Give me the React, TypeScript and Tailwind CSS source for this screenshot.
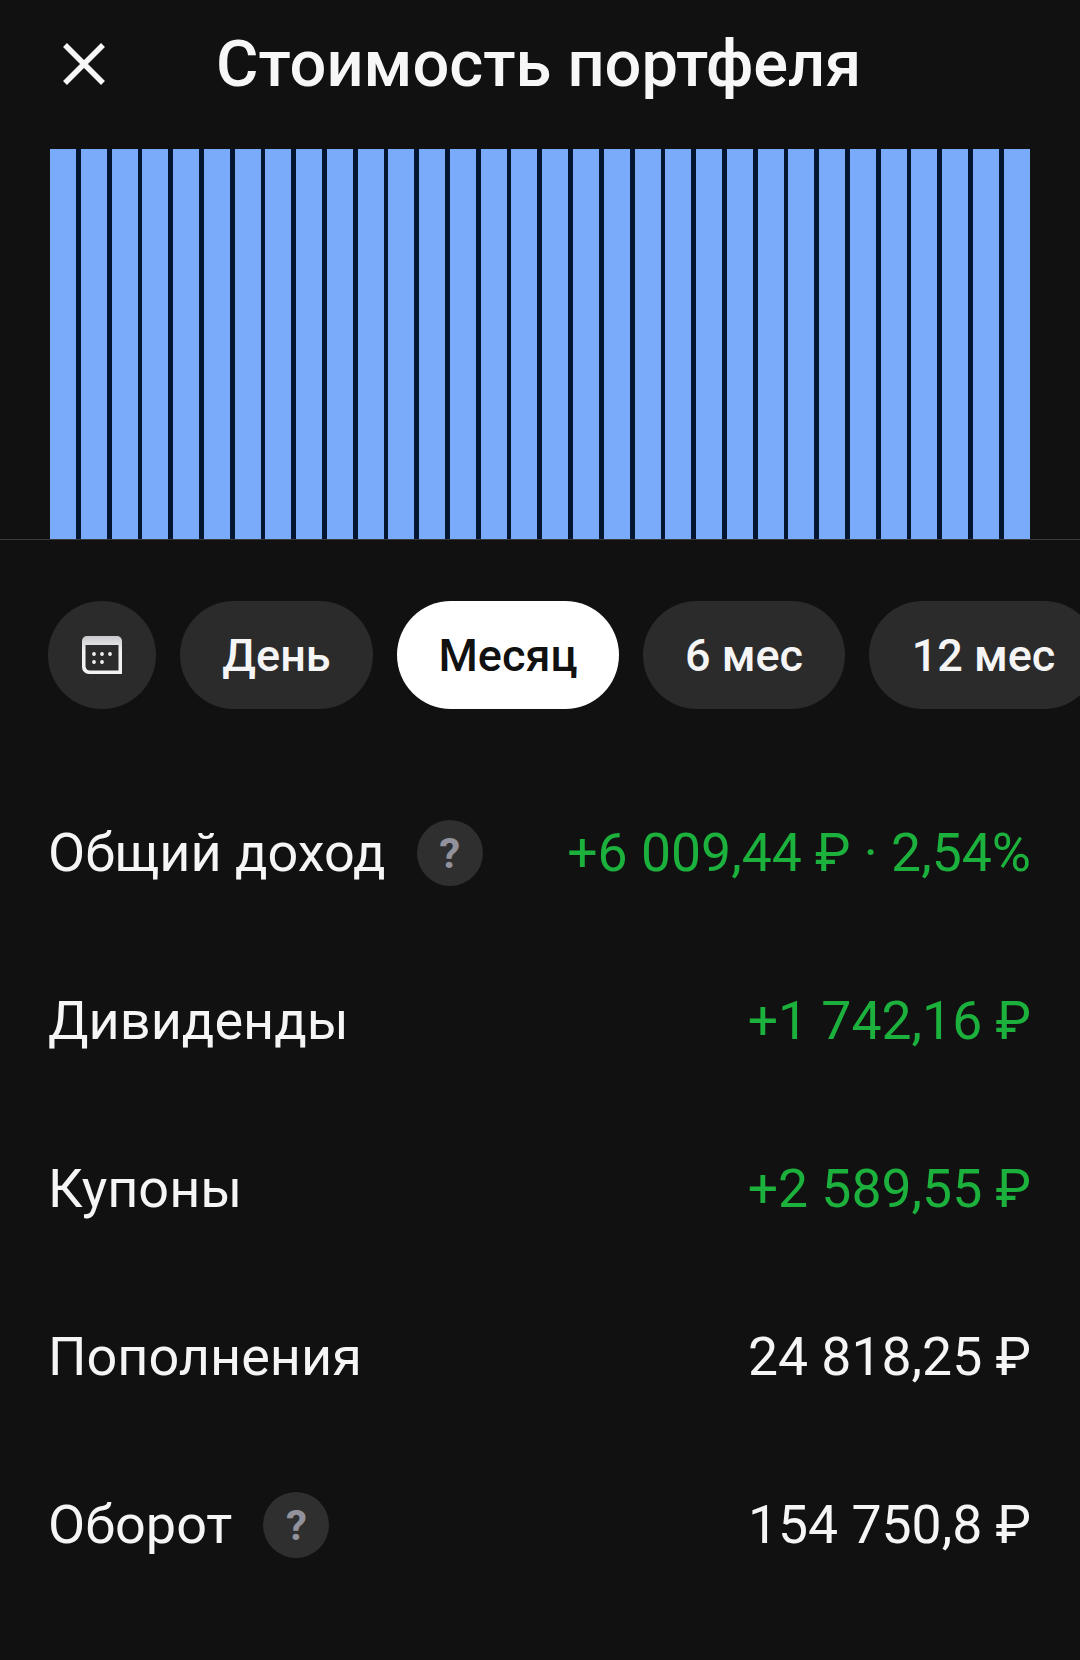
const bars = Array.from({ length: 32 }, (_, i) => i);

function Help() {
  return (
    <span className="flex h-[66px] w-[66px] shrink-0 items-center justify-center rounded-full bg-[#2f2f2f] text-[42px] font-bold text-[#92929c]">
      ?
    </span>
  );
}

function Row({ label, value, help, green }: { label: string; value: string; help?: boolean; green?: boolean }) {
  return (
    <div className="flex h-[168px] items-center justify-between">
      <div className="flex items-center gap-[31px]">
        <span className="pb-[2px] text-[54px] text-[#f5f5f6]">{label}</span>
        {help && <Help />}
      </div>
      <span className={`whitespace-nowrap text-[53.500px] ${green ? "text-[#1cb03c]" : "text-[#f5f5f6]"}`}>{value}</span>
    </div>
  );
}

export default function App() {
  return (
    <div className="h-[1660px] w-[1080px] overflow-hidden bg-[#111111] font-['Roboto',sans-serif]">
      <header className="flex h-[149px] items-start pl-[63px]">
        <svg width="42" height="42" viewBox="0 0 42 42" className="mt-[43px]" fill="none" stroke="#f7f7f8" strokeWidth="5.500">
          <path d="M2 2 L40 40 M40 2 L2 40" />
        </svg>
        <h1 className="ml-[111px] mt-[24px] whitespace-nowrap text-[65px] leading-[80px] font-medium text-[#f7f7f8]">Стоимость портфеля</h1>
      </header>
      <div className="border-b border-[#3a3a3a] px-[50px]">
        <div className="flex h-[390px] w-[980px] justify-between bg-[#04152f]">
          {bars.map((i) => (
            <div key={i} className="h-full w-[26px] bg-[#7aaafa]" />
          ))}
        </div>
      </div>
      <div className="mt-[61px] flex h-[108px] gap-[24px] pl-[48px]">
        <div className="flex h-[108px] w-[108px] shrink-0 items-center justify-center rounded-full bg-[#2b2b2b]">
          <svg width="40" height="38" viewBox="0 0 40 38">
            <defs>
              <linearGradient id="calTop" x1="0" y1="0" x2="0" y2="1">
                <stop offset="0" stopColor="#c9c9cd" />
                <stop offset="0.4" stopColor="#f2f2f3" />
              </linearGradient>
            </defs>
            <path d="M5 0H35A5 5 0 0 1 40 5V38H7A7 7 0 0 1 0 31V5A5 5 0 0 1 5 0Z" fill="url(#calTop)" />
            <path d="M3.500 9H36.500V34.500H8A4.500 4.500 0 0 1 3.500 30Z" fill="#2b2b2b" />
            <g fill="#f2f2f3">
              <circle cx="12" cy="18" r="1.900" />
              <circle cx="20" cy="18" r="1.900" />
              <circle cx="28" cy="18" r="1.900" />
              <circle cx="12" cy="26" r="1.900" />
              <circle cx="20" cy="26" r="1.900" />
            </g>
          </svg>
        </div>
        <div className="flex w-[193px] shrink-0 items-center justify-center rounded-full bg-[#2b2b2b] pt-[2px] text-[45px] font-medium text-[#f5f5f6]">День</div>
        <div className="flex w-[222px] shrink-0 items-center justify-center rounded-full bg-white pt-[2px] text-[45px] font-medium text-[#111111]">Месяц</div>
        <div className="flex w-[202px] shrink-0 items-center justify-center rounded-full bg-[#2b2b2b] pt-[2px] text-[45px] font-medium text-[#f5f5f6]">6 мес</div>
        <div className="flex w-[229px] shrink-0 items-center justify-center rounded-full bg-[#2b2b2b] pt-[2px] text-[45px] font-medium text-[#f5f5f6]">12 мес</div>
      </div>
      <div className="mt-[60px] pl-[48px] pr-[49px]">
        <Row label="Общий доход" value="+6 009,44 ₽ · 2,54%" help green />
        <Row label="Дивиденды" value="+1 742,16 ₽" green />
        <Row label="Купоны" value="+2 589,55 ₽" green />
        <Row label="Пополнения" value="24 818,25 ₽" />
        <Row label="Оборот" value="154 750,8 ₽" help />
      </div>
    </div>
  );
}
